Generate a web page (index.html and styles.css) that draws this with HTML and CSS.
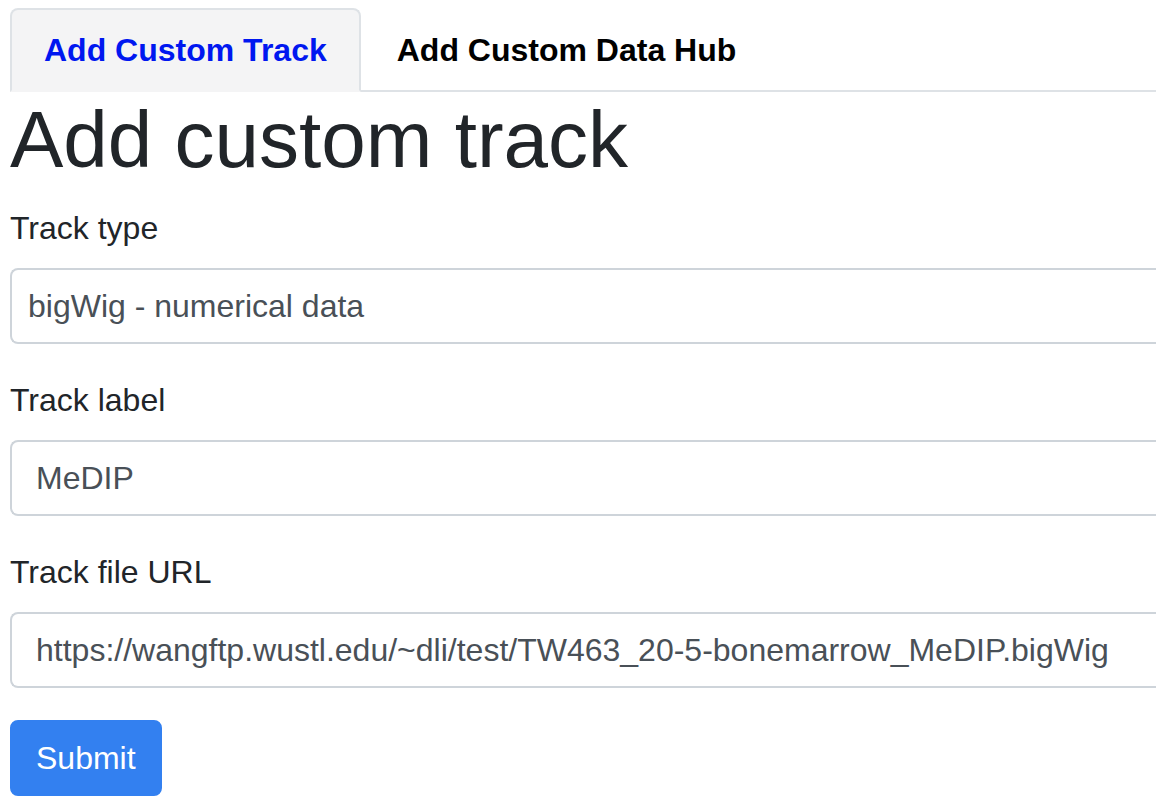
FILE: index.html
```html
<!DOCTYPE html>
<html lang="en">
<head>
<meta charset="utf-8">
<title>Add Custom Track</title>
<link rel="stylesheet" href="styles.css">
</head>
<body>
<div class="page">
  <ul class="tabs">
    <li class="tab active">Add Custom Track</li>
    <li class="tab">Add Custom Data Hub</li>
  </ul>
  <h1 class="title">Add custom track</h1>
  <form class="form">
    <div class="group">
      <label class="label">Track type</label>
      <div class="control select">bigWig - numerical data</div>
    </div>
    <div class="group">
      <label class="label">Track label</label>
      <div class="control">MeDIP</div>
    </div>
    <div class="group">
      <label class="label">Track file URL</label>
      <div class="control">https://wangftp.wustl.edu/~dli/test/TW463_20-5-bonemarrow_MeDIP.bigWig</div>
    </div>
    <button type="button" class="btn">Submit</button>
  </form>
</div>
</body>
</html>
```

FILE: styles.css
```css
html, body {
  margin: 0;
  padding: 0;
  overflow: hidden;
  background: #ffffff;
}
body {
  font-family: "Liberation Sans", Arial, Helvetica, sans-serif;
  color: #212529;
  font-size: 32px;
  line-height: 1.5;
}
.page {
  padding: 8px 0 0 10px;
}
.tabs {
  list-style: none;
  margin: 0;
  padding: 0;
  display: flex;
  border-bottom: 2px solid #dee2e6;
}
.tab {
  font-weight: bold;
  font-size: 32px;
  line-height: 48px;
  padding: 16px 32px;
  border: 2px solid transparent;
  border-radius: 8px 8px 0 0;
  margin-bottom: -2px;
  color: #000000;
}
.tab + .tab {
  margin-left: 2px;
}
.tab.active {
  background: #f4f4f5;
  border-color: #dee2e6 #dee2e6 #f4f4f5;
  color: #0017f0;
}
.title {
  font-size: 80px;
  font-weight: 500;
  line-height: 1.2;
  margin: 0 0 16px 0;
  color: #212529;
}
.form {
  margin: 0;
}
.group {
  margin-bottom: 32px;
}
.label {
  display: block;
  margin-bottom: 16px;
}
.control {
  box-sizing: border-box;
  height: 76px;
  padding: 12px 24px;
  border: 2px solid #ced4da;
  border-right: 0;
  border-radius: 8px 0 0 8px;
  color: #495057;
  line-height: 48px;
  white-space: nowrap;
  overflow: hidden;
}
.control.select {
  padding-left: 16px;
}
.btn {
  display: block;
  box-sizing: border-box;
  height: 76px;
  padding: 12px 24px;
  border: 2px solid #3380f0;
  border-radius: 8px;
  background: #3380f0;
  color: #ffffff;
  font-family: inherit;
  font-size: 32px;
  line-height: 48px;
  margin-top: 1px;
}
```
